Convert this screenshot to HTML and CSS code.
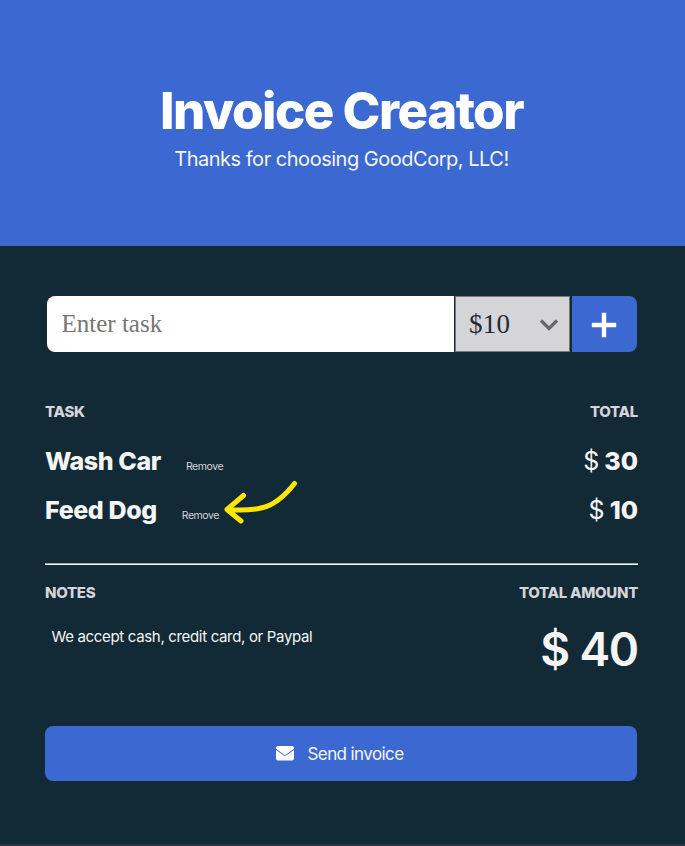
FILE: index.html
```html
<!DOCTYPE html>
<html lang="en">
<head>
<meta charset="utf-8">
<title>Invoice Creator</title>
<link rel="stylesheet" href="styles.css">
</head>
<body>
<header class="header">
  <h1 class="title"><span>Invoice Creator</span></h1>
  <p class="subtitle"><span>Thanks for choosing GoodCorp, LLC!</span></p>
</header>
<main class="main">
  <form class="entry">
    <input class="task-input" type="text" placeholder="Enter task" aria-label="Task">
    <div class="price"><span>$10</span>
      <svg class="chevron" viewBox="0 0 20 13"><path d="M2 2.500l8 8 8-8" fill="none" stroke="#666" stroke-width="3.200"/></svg>
    </div>
    <button class="add" type="button" aria-label="Add"><svg width="26" height="26" viewBox="0 0 26 26"><path d="M13 .8v24.400M.8 13h24.400" stroke="#fff" stroke-width="4.4"/></svg></button>
  </form>
  <div class="row labels"><span>TASK</span><span>TOTAL</span></div>
  <ul class="tasks">
    <li class="row task"><span class="name">Wash Car</span><button class="remove" type="button">Remove</button><span class="cost"><span class="sign">$</span><b>30</b></span></li>
    <li class="row task"><span class="name">Feed Dog</span><button class="remove" type="button">Remove
      <svg class="arrow" viewBox="0 0 76 46" width="76" height="46"><path d="M71.500 5.500C61 19 51 27.500 38 30C27 32.500 17 32.500 5 31.500M20.500 17.500L4 31.500L18 43" fill="none" stroke="#ffe600" stroke-width="5" stroke-linecap="round" stroke-linejoin="round"/></svg></button><span class="cost"><span class="sign">$</span><b>10</b></span></li>
  </ul>
  <div class="rule"></div>
  <div class="row labels summary"><span>NOTES</span><span>TOTAL AMOUNT</span></div>
  <div class="row bottom"><p class="note">We accept cash, credit card, or Paypal</p><strong class="amount">$ 40</strong></div>
  <button class="send" type="button"><svg width="18" height="15" viewBox="0 0 18 15"><path d="M2 0h14a2 2 0 0 1 2 1.800v.9L9 9.200 0 2.700v-.9A2 2 0 0 1 2 0zM0 3.900l9 6.400 9-6.400V12.500a2 2 0 0 1-2 2H2a2 2 0 0 1-2-2z" fill="#fff"/></svg><span>Send invoice</span></button>
</main>
<div class="edge"></div>
</body>
</html>
```
FILE: styles.css
```css
* { box-sizing: border-box; }
body {
  margin: 0;
  height: 846px;
  display: flex;
  flex-direction: column;
  background: #122936;
  color: #f5f5f5;
  font-family: Inter, sans-serif;
  overflow: hidden;
}
button { font-family: inherit; color: inherit; border: 0; padding: 0; margin: 0; }
svg { display: block; flex: none; }
.header {
  height: 246px;
  padding: 80px 2px 0 0;
  background: #3b69d1;
  text-align: center;
}
.title {
  margin: 0;
  color: #fff;
  font-size: 51px;
  line-height: 62px;
  font-weight: 800;
  letter-spacing: -1.5px;
}
.subtitle {
  margin: 4px 0 0;
  font-size: 20px;
  line-height: 26px;
  letter-spacing: -0.48px;
}
.main { flex: 1; padding: 50px 48px 0 45px; }
.entry { display: flex; height: 56px; margin-left: 2px; }
.task-input {
  width: 407px;
  height: 56px;
  padding: 0 15px 0 14.5px;
  border: 0;
  border-radius: 8px 0 0 8px;
  background: #fff;
  font: 25px "Liberation Serif", serif;
}
.task-input::placeholder { color: #757575; }
.price {
  width: 115px;
  margin-left: 1px;
  padding: 0 10px 0 13px;
  display: flex;
  align-items: center;
  justify-content: space-between;
  border: 1px solid #767676;
  background: #d5d4d9;
  color: #1f2937;
  font: 27px "Liberation Serif", serif;
}
.price span { letter-spacing: 0.2px; }
.chevron { width: 20px; height: 13px; }
.add {
  width: 65px;
  margin-left: 2px;
  padding: 2px 1px 0 0;
  display: flex;
  align-items: center;
  justify-content: center;
  border-radius: 0 8px 8px 0;
  background: #3b69d1;
}
.row { display: flex; justify-content: space-between; width: 593px; }
.labels {
  margin-top: 50px;
  color: #d5d4d9;
  font-size: 15px;
  line-height: 20px;
  font-weight: 800;
  letter-spacing: -0.3px;
}
.tasks { margin: 15px 0 0; padding: 0; list-style: none; }
.task { height: 49px; align-items: baseline; line-height: 49px; }
.name { font-size: 25px; font-weight: 800; letter-spacing: -0.4px; }
.remove {
  position: relative;
  margin: 0 auto 0 25px;
  background: none;
  font-size: 10.5px;
  line-height: 14px;
  letter-spacing: -0.45px;
  color: #d5d4d9;
}
.arrow { position: absolute; left: 41px; top: -31px; }
.cost { display: flex; gap: 5px; font-size: 25px; letter-spacing: 0; }
.cost b { font-weight: 800; }
.rule { width: 593px; height: 2px; margin-top: 28px; background: #f5f5f5; border-top: 1px solid #9da5aa; }
.summary { margin-top: 18px; }
.bottom { margin-top: 18px; height: 56px; }
.note { margin: 6px 0 0 6.5px; font-size: 15px; line-height: 20px; letter-spacing: -0.33px; }
.amount { font-size: 46px; line-height: 56px; font-weight: 600; letter-spacing: -1.2px; }
.send {
  width: 592px;
  height: 55px;
  margin-top: 49px;
  padding-right: 3px;
  display: flex;
  align-items: center;
  justify-content: center;
  gap: 14px;
  border-radius: 8px;
  background: #3b69d1;
  font-size: 17px;
  letter-spacing: -0.6px;
}
.edge { height: 2px; background: #263442; }
```
